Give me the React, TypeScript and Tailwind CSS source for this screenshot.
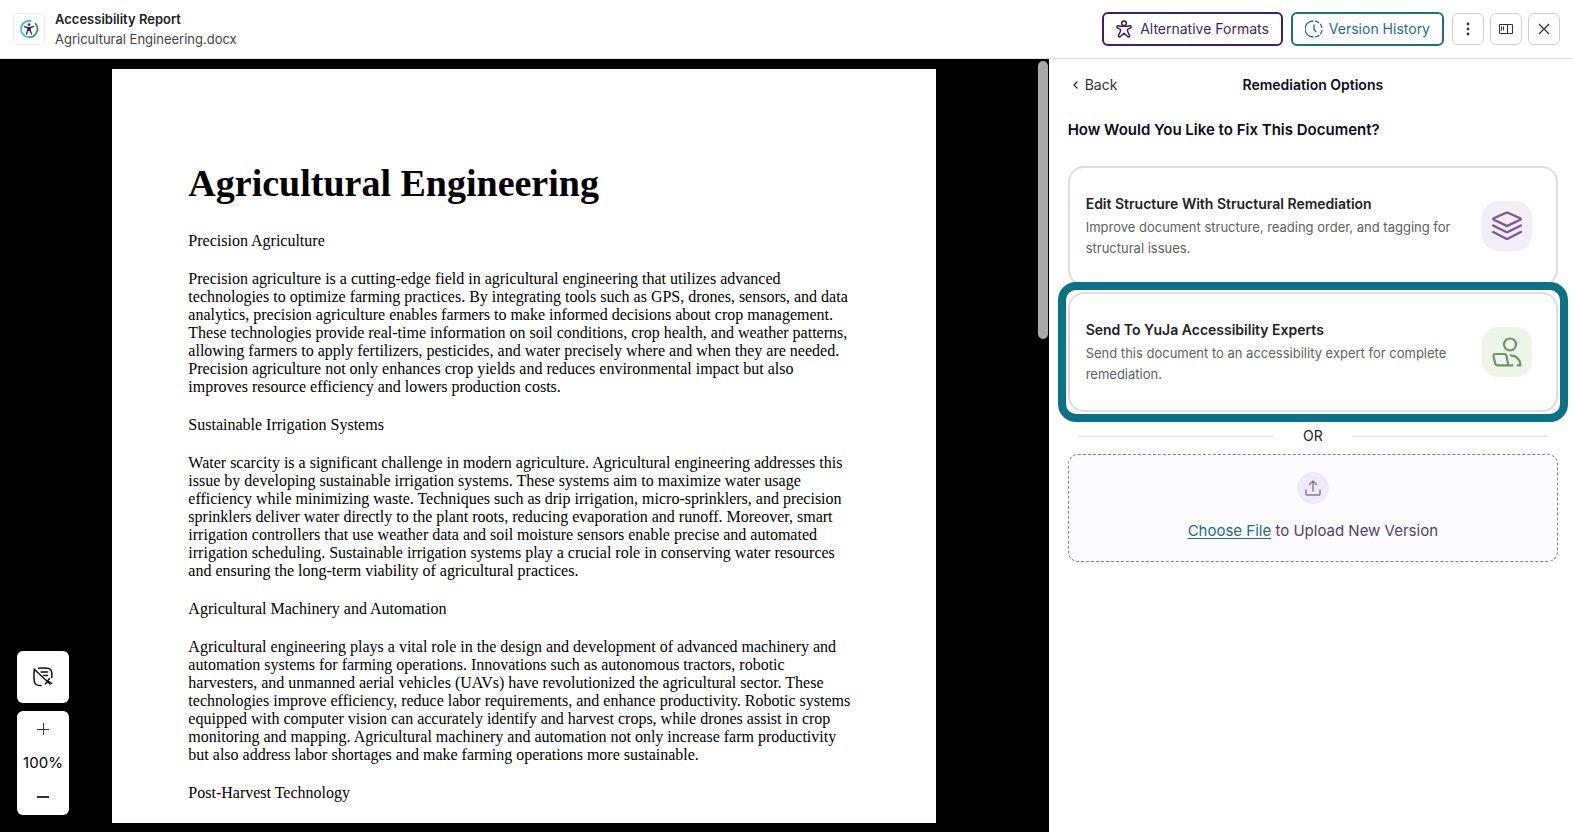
import type { ReactNode } from "react";

const sections = [
  {
    title: "Precision Agriculture",
    body: "Precision agriculture is a cutting-edge field in agricultural engineering that utilizes advanced technologies to optimize farming practices. By integrating tools such as GPS, drones, sensors, and data analytics, precision agriculture enables farmers to make informed decisions about crop management. These technologies provide real-time information on soil conditions, crop health, and weather patterns, allowing farmers to apply fertilizers, pesticides, and water precisely where and when they are needed. Precision agriculture not only enhances crop yields and reduces environmental impact but also improves resource efficiency and lowers production costs.",
  },
  {
    title: "Sustainable Irrigation Systems",
    body: "Water scarcity is a significant challenge in modern agriculture. Agricultural engineering addresses this issue by developing sustainable irrigation systems. These systems aim to maximize water usage efficiency while minimizing waste. Techniques such as drip irrigation, micro-sprinklers, and precision sprinklers deliver water directly to the plant roots, reducing evaporation and runoff. Moreover, smart irrigation controllers that use weather data and soil moisture sensors enable precise and automated irrigation scheduling. Sustainable irrigation systems play a crucial role in conserving water resources and ensuring the long-term viability of agricultural practices.",
  },
  {
    title: "Agricultural Machinery and Automation",
    body: "Agricultural engineering plays a vital role in the design and development of advanced machinery and automation systems for farming operations. Innovations such as autonomous tractors, robotic harvesters, and unmanned aerial vehicles (UAVs) have revolutionized the agricultural sector. These technologies improve efficiency, reduce labor requirements, and enhance productivity. Robotic systems equipped with computer vision can accurately identify and harvest crops, while drones assist in crop monitoring and mapping. Agricultural machinery and automation not only increase farm productivity but also address labor shortages and make farming operations more sustainable.",
  },
];

function Logo() {
  return (
    <svg width="20" height="20" viewBox="0 0 20 20" fill="none">
      <path d="M12.4 2.1A8.2 8.2 0 1 0 10 18.2" stroke="#3fc3c8" strokeWidth="1.8" />
      <path d="M16 4.2A8.2 8.2 0 0 1 10 18.2" stroke="#2a8f9d" strokeWidth="1.8" />
      <circle cx="10" cy="5.6" r="1.3" fill="#3b1e6d" />
      <path d="M5.4 7.6 8.9 8.5V11L7.4 15M14.6 7.6 11.1 8.5V11l1.5 4" stroke="#3b1e6d" strokeWidth="1.3" strokeLinecap="round" />
      <path d="M8.5 8h3v4h-3z" fill="#3b1e6d" />
    </svg>
  );
}

function PersonIcon() {
  return (
    <svg width="16" height="18" viewBox="0 0 18 20" fill="none" stroke="currentColor" strokeWidth="1.7" strokeLinejoin="round">
      <circle cx="9" cy="3.6" r="2.6" />
      <path d="M2.4 6.400c2 .5 4 .6 6.600.6s4.600-.1 6.600-.6c1.400-.3 2 1.700.7 2.400l-3.300 1.700v2l2.200 4.700c.5 1.500-1.600 2.300-2.400 1L9 14.800l-3.800 3.400c-.8 1.300-2.900.5-2.400-1L5 12.500v-2L1.700 8.800c-1.300-.7-.7-2.700.7-2.400z" />
    </svg>
  );
}

function HistoryIcon() {
  return (
    <svg width="18" height="18" viewBox="0 0 18 18" fill="none" stroke="currentColor" strokeWidth="1.3" strokeLinecap="round">
      <path d="M8 1a8 8 0 0 0 0 16" />
      <path d="M10.5 1.2a8 8 0 0 1 3.300 1.500M15.500 4.300a8 8 0 0 1 1.300 3M16.900 10.500a8 8 0 0 1-1.300 3.200M13.800 15.400a8 8 0 0 1-3.200 1.500" />
      <path d="M9 5v4.200l2 2.600" />
    </svg>
  );
}

function LayersIcon() {
  return (
    <svg width="30" height="30" viewBox="0 0 30 30" fill="none" stroke="#7f529f" strokeWidth="2.3" strokeLinecap="round" strokeLinejoin="round">
      <path d="M14.200 1.700 1.800 7.300c-.8.400-.8 1 0 1.400l12.400 5.900c.6.300 1 .3 1.600 0l12.400-5.900c.8-.4.8-1 0-1.400L15.800 1.700c-.6-.3-1-.3-1.600 0z" />
      <path d="M1.200 14.500 14.200 21c.6.300 1 .3 1.600 0l13-6.500" />
      <path d="m1.200 21 13 6.700c.6.300 1 .3 1.600 0l13-6.700" />
    </svg>
  );
}

function ExpertIcon() {
  return (
    <svg width="30" height="30" viewBox="0 0 30 30" fill="none" stroke="#6f9268" strokeWidth="2.2" strokeLinecap="round" strokeLinejoin="round">
      <circle cx="18" cy="7.500" r="6" />
      <path d="M3.300 17h9.200c1 0 1.700.6 1.900 1.500l1.900 9.800H5.200c-1 0-1.700-.6-1.900-1.600l-1.800-7.800c-.2-1 .6-1.900 1.800-1.900z" />
      <path d="M16.300 28.300h4.200M18.800 18.400c5.500.4 9.200 3.600 9.700 9.900h-2.800" />
    </svg>
  );
}

function NoteOffIcon() {
  return (
    <svg width="20" height="20" viewBox="0 0 20 20" fill="none" stroke="#111" strokeWidth="1.5" strokeLinecap="round" strokeLinejoin="round">
      <path d="M1 2l16 15M5.500 1.200c3-.4 6-.4 9 0 3 .3 4 1.500 4.200 4.300.2 1.700.2 3.400 0 5M1.200 3.500c-.3 3-.3 7 .1 10.500.3 3 1.700 4.200 4.700 4.400h2" />
      <path d="M8 5h6.500M10.500 8.500h4M16.500 11.500l-2 2.500M12.500 17l2-2.500 2 .5 2.200 1.500" />
    </svg>
  );
}

function IconButton({ label, children }: { label: string; children: ReactNode }) {
  return (
    <button aria-label={label} className="flex size-8 items-center justify-center rounded-md border border-[#cfcfcf] text-[#333]">
      {children}
    </button>
  );
}

function OptionCard({ title, text, iconBg, icon, highlighted }: { title: string; text: string; iconBg: string; icon: ReactNode; highlighted?: boolean }) {
  return (
    <div className="relative">
      <button className="flex h-[120px] w-full items-center gap-6 rounded-2xl border-2 border-[#dedede] bg-white pr-6 pl-4 text-left">
        <span className="flex-1">
          <span className="block text-sm leading-[22px] font-semibold text-[#222]">{title}</span>
          <span className="mt-[2px] block text-[13px] leading-[21px] text-[#5f5f5f]">{text}</span>
        </span>
        <span className={`flex size-[50px] items-center justify-center rounded-2xl ${iconBg}`}>{icon}</span>
      </button>
      {highlighted && <div className="pointer-events-none absolute -inset-[10px] rounded-[18px] border-8 border-[#0b7187]" />}
    </div>
  );
}

export default function App() {
  return (
    <div className="flex h-screen flex-col overflow-hidden bg-white font-['Inter',sans-serif] text-[#222]">
      <header className="flex h-[59px] shrink-0 items-center justify-between border-b border-[#e0e0e0] px-[13px]">
        <div className="flex items-center gap-[10px]">
          <div className="flex size-8 items-center justify-center rounded-md border border-[#ececec]">
            <Logo />
          </div>
          <div>
            <h1 className="text-[13px] leading-5 font-semibold">Accessibility Report</h1>
            <p className="text-[13px] leading-5 text-[#444]">Agricultural Engineering.docx</p>
          </div>
        </div>
        <div className="flex items-center gap-2">
          <button className="flex h-[34px] items-center gap-2 rounded-md border-2 border-[#3d1f6f] px-3 text-sm text-[#3d1f6f]">
            <PersonIcon />
            Alternative Formats
          </button>
          <button className="flex h-[34px] items-center gap-[6px] rounded-md border-2 border-[#1d6f85] px-3 text-sm text-[#1d6f85]">
            <HistoryIcon />
            Version History
          </button>
          <div className="flex gap-[6px]">
            <IconButton label="More options">
              <svg width="4" height="14" viewBox="0 0 4 14" fill="currentColor">
                <circle cx="2" cy="2" r="1.4" />
                <circle cx="2" cy="7" r="1.4" />
                <circle cx="2" cy="12" r="1.4" />
              </svg>
            </IconButton>
            <IconButton label="Toggle panel">
              <svg width="14" height="12" viewBox="0 0 14 12" fill="none" stroke="currentColor">
                <path d="M.5 1.500h13v9H.5zM8.500 1.500v9M2.500 3.500v4M4.500 3.500v4" />
              </svg>
            </IconButton>
            <IconButton label="Close">
              <svg width="12" height="12" viewBox="0 0 12 12" fill="none" stroke="currentColor" strokeWidth="1.3">
                <path d="M1 1l10 10M11 1 1 11" />
              </svg>
            </IconButton>
          </div>
        </div>
      </header>

      <main className="flex min-h-0 flex-1">
        <section className="relative flex w-2/3 justify-center bg-black pt-[10px] pb-[9px]">
          <article className="w-[824px] overflow-hidden bg-white pt-[91px] pr-[82px] pl-[76px] font-['Liberation_Serif',serif] text-base leading-[18px] text-black">
            <h2 className="mb-[26px] text-[38px] leading-[46px] font-bold">Agricultural Engineering</h2>
            {sections.map((section) => (
              <div key={section.title}>
                <h3 className="mb-5">{section.title}</h3>
                <p className="mb-5">{section.body}</p>
              </div>
            ))}
            <h3>Post-Harvest Technology</h3>
          </article>

          <div className="absolute top-[2px] right-[1px] h-[278px] w-[10px] rounded-full bg-[#a9a9a9]" />

          <div className="absolute bottom-[17px] left-[17px] flex w-[52px] flex-col gap-2">
            <button aria-label="Hide annotations" className="flex h-[52px] items-center justify-center rounded-md bg-white">
              <NoteOffIcon />
            </button>
            <div className="flex h-[104px] flex-col items-center justify-between rounded-md bg-white py-2 text-black">
              <button aria-label="Zoom in" className="flex h-5 items-center">
                <svg width="12" height="12" viewBox="0 0 12 12" stroke="#333"><path d="M0 6.500h12M6.500 0v12" /></svg>
              </button>
              <span className="text-[15px] leading-5">100%</span>
              <button aria-label="Zoom out" className="flex h-5 items-center">
                <svg width="12" height="12" viewBox="0 0 12 12" stroke="#333" strokeWidth="2"><path d="M0 6h12" /></svg>
              </button>
            </div>
          </div>
        </section>

        <aside className="w-1/3 pt-4 pr-[15px] pl-[19px]">
          <div className="grid grid-cols-[1fr_auto_1fr] items-center leading-5">
            <button className="flex items-center gap-[6px] pl-1 text-sm text-[#333]">
              <svg width="7" height="8" viewBox="0 0 7 8" fill="none" stroke="currentColor" strokeWidth="1.3"><path d="M5.500.5 2 4l3.500 3.500" /></svg>
              Back
            </button>
            <h2 className="text-sm font-semibold text-[#0b0b1e]">Remediation Options</h2>
          </div>
          <h3 className="mt-[23px] text-[15px] leading-6 font-semibold text-[#0b0b1e]">How Would You Like to Fix This Document?</h3>

          <div className="mt-6 flex flex-col gap-[6px]">
            <OptionCard
              title="Edit Structure With Structural Remediation"
              text="Improve document structure, reading order, and tagging for structural issues."
              iconBg="bg-[#f2eef7]"
              icon={<LayersIcon />}
            />
            <OptionCard
              title="Send To YuJa Accessibility Experts"
              text="Send this document to an accessibility expert for complete remediation."
              iconBg="bg-[#edf5e8]"
              icon={<ExpertIcon />}
              highlighted
            />
          </div>

          <div className="mt-[14px] flex items-center px-[10px] text-sm leading-5">
            <hr className="flex-1 border-[#e0e0e0]" />
            <span className="w-[78px] text-center">OR</span>
            <hr className="flex-1 border-[#e0e0e0]" />
          </div>

          <div className="mt-2 flex h-[108px] flex-col items-center rounded-[10px] border border-dashed border-[#8a7aab] bg-[#fcfbff] pt-[17px]">
            <div className="flex size-8 items-center justify-center rounded-full bg-[#efeafa]">
              <svg width="16" height="16" viewBox="0 0 16 16" fill="none" stroke="#84759f" strokeWidth="1.4" strokeLinecap="round" strokeLinejoin="round">
                <path d="M8 11V1M4.500 4.500 8 1l3.500 3.500M1 10v4c0 .6.400 1 1 1h12c.6 0 1-.4 1-1v-4" />
              </svg>
            </div>
            <p className="mt-4 text-[15px] leading-[22px] text-[#4f4170]">
              <a href="#upload" className="text-[#1d6f85] underline underline-offset-2">Choose File</a> to Upload New Version
            </p>
          </div>
        </aside>
      </main>
    </div>
  );
}
